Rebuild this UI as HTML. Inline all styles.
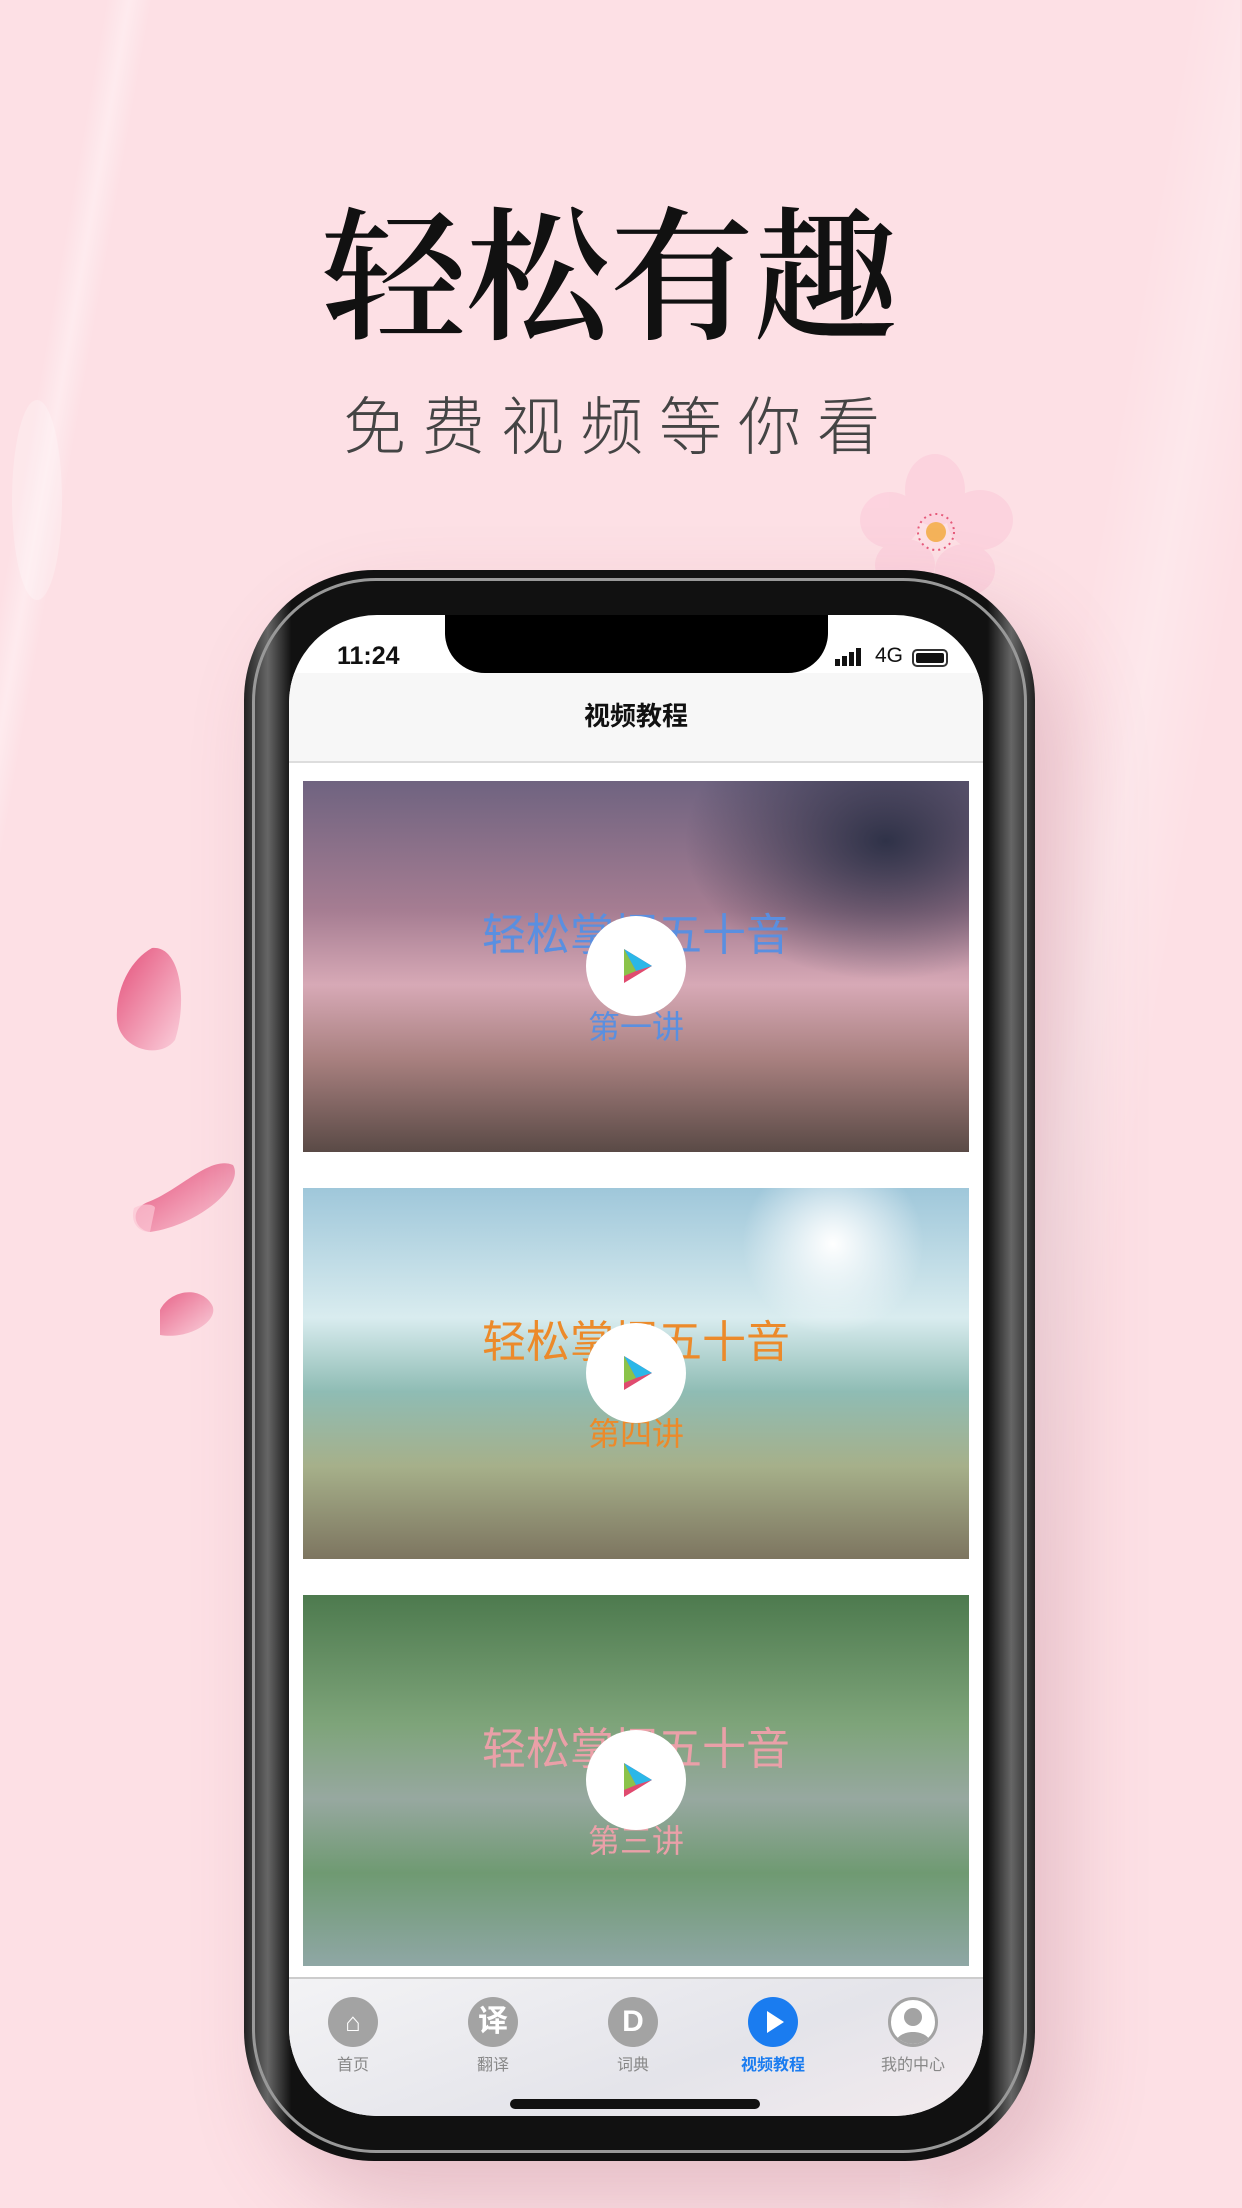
<!DOCTYPE html>
<html><head><meta charset="utf-8"><style>
*{margin:0;padding:0;box-sizing:border-box}
body{width:1242px;height:2208px;overflow:hidden;background:#fde0e5;position:relative;font-family:"Liberation Sans","Noto Sans CJK SC",sans-serif}
.abs{position:absolute}
.title{left:322px;top:196px;width:600px;font-family:"Liberation Serif","Noto Serif CJK SC",serif;font-weight:600;font-size:144px;line-height:170px;color:#111;white-space:nowrap}
.sub{left:343px;top:388px;font-family:"Liberation Sans","Noto Sans CJK SC",sans-serif;font-weight:300;font-size:63px;line-height:80px;letter-spacing:16px;color:#444;white-space:nowrap}
.phone{left:244px;top:570px;width:791px;height:1591px;border-radius:130px;background:linear-gradient(90deg,#222,#666 3%,#111 6%,#111 94%,#666 97%,#222);box-shadow:30px 40px 80px rgba(160,90,110,.25)}
.screen{left:289px;top:615px;width:694px;height:1501px;border-radius:88px;background:#fff;overflow:hidden}
.notch{left:156px;top:0;width:383px;height:58px;background:#000;border-radius:0 0 40px 40px}
.card{left:14px;width:666px;height:371px;overflow:hidden}
.ct{position:absolute;left:0;width:100%;text-align:center;font-size:44px;line-height:50px}
.cs{position:absolute;left:0;width:100%;text-align:center;font-size:32px;line-height:40px}
.play{position:absolute;left:283px;width:100px;height:100px;border-radius:50%;background:#fff}
.tab{position:absolute;top:18px;width:100px;text-align:center;font-size:16px;color:#888}
.ic{width:50px;height:50px;border-radius:50%;background:#a3a3a3;margin:0 auto 4px;color:#fff;font-weight:bold;font-size:30px;line-height:50px;text-align:center}
</style></head><body>
<div class="abs" style="left:-100px;top:0;width:300px;height:900px;background:linear-gradient(100deg,transparent 45%,rgba(255,255,255,.35) 50%,transparent 55%)"></div>
<div class="abs" style="left:900px;top:0;width:340px;height:2208px;background:linear-gradient(100deg,transparent 40%,rgba(255,255,255,.25) 50%,transparent 60%)"></div>
<div class="abs" style="left:12px;top:400px;width:50px;height:200px;border-radius:50%;background:rgba(255,255,255,.25)"></div>
<div class="abs title">轻松有趣</div>
<div class="abs sub">免费视频等你看</div>
<svg class="abs" style="left:850px;top:450px" width="170" height="150" viewBox="0 0 170 150">
<g fill="#fccfdc" opacity=".75">
<ellipse cx="85" cy="40" rx="30" ry="36"/><ellipse cx="130" cy="70" rx="33" ry="30"/><ellipse cx="115" cy="120" rx="30" ry="26"/><ellipse cx="55" cy="115" rx="30" ry="26"/><ellipse cx="40" cy="70" rx="30" ry="28"/></g>
<circle cx="86" cy="82" r="10" fill="#f5b35a"/><circle cx="86" cy="82" r="18" fill="none" stroke="#e65a7a" stroke-width="2" stroke-dasharray="2 4"/>
</svg>
<svg class="abs" style="left:100px;top:940px" width="150" height="440" viewBox="0 0 150 440">
<defs><linearGradient id="pg" x1="0" y1="0" x2="1" y2="1"><stop offset="0" stop-color="#e4507a"/><stop offset="1" stop-color="#fbd0dc"/></linearGradient></defs>
<path d="M52 8 C80 5 88 60 75 100 C60 120 20 110 17 80 C15 50 30 20 52 8Z" fill="url(#pg)"/>
<path d="M48 262 C80 250 110 215 133 225 C145 245 100 285 50 292 C35 290 28 270 48 262Z" fill="url(#pg)"/>
<path d="M34 268 C45 262 55 265 55 268 L50 292 C38 292 30 282 34 268Z" fill="#fbc6d4" opacity=".7"/>
<path d="M60 395 C90 400 120 380 112 365 C100 345 70 350 60 370Z" fill="url(#pg)" opacity=".85"/>
</svg>
<div class="abs phone"></div>
<div class="abs" style="left:252px;top:578px;width:775px;height:1575px;border-radius:124px;border:3px solid #999"></div>
<div class="abs screen">
 <div class="abs notch"></div>
 <div class="abs" style="left:48px;top:27px;font-size:25px;font-weight:bold;color:#111">11:24</div>
 <div class="abs" style="left:546px;top:33px;width:32px;height:18px">
  <div class="abs" style="left:0;top:11px;width:5px;height:7px;background:#111"></div><div class="abs" style="left:7px;top:8px;width:5px;height:10px;background:#111"></div><div class="abs" style="left:14px;top:4px;width:5px;height:14px;background:#111"></div><div class="abs" style="left:21px;top:0;width:5px;height:18px;background:#111"></div></div>
 <div class="abs" style="left:586px;top:29px;font-size:21px;color:#111">4G</div>
 <div class="abs" style="left:623px;top:34px;width:36px;height:18px;border:2px solid #333;border-radius:5px;padding:2px"><div style="width:100%;height:100%;background:#111;border-radius:2px"></div></div>
 <div class="abs" style="left:0;top:58px;width:694px;height:90px;background:#f7f7f7;border-bottom:2px solid #ddd;text-align:center;font-size:26px;font-weight:bold;line-height:86px;color:#111">视频教程</div>
 <div class="abs card" style="top:166px;background:linear-gradient(180deg,#6f6380 0%,#a67d92 35%,#d7a9b6 55%,#a8807f 75%,#5a4a46 100%)">
  <div class="abs" style="left:380px;top:0;width:290px;height:200px;background:radial-gradient(ellipse at 70% 30%,#2f3248,transparent 70%)"></div>
  <div class="ct" style="top:130px;color:#5a8fe0">轻松掌握五十音</div><div class="cs" style="top:226px;color:#5a8fe0">第一讲</div>
  <div class="play" style="top:135px"><svg width="100" height="100" viewBox="0 0 100 100"><path d="M38 33 L66 50 L38 67Z" fill="#e04b6f"/><path d="M38 33 L66 50 L50 55Z" fill="#2bb7e8"/><path d="M38 33 L50 55 L38 60Z" fill="#8bc34a"/></svg></div>
 </div>
 <div class="abs card" style="top:573px;background:linear-gradient(180deg,#9fc7da 0%,#d9ecef 35%,#8fbcb4 55%,#a6b08a 75%,#7d7560 100%)">
  <div class="abs" style="left:420px;top:0;width:220px;height:160px;background:radial-gradient(circle at 50% 35%,#fff,transparent 60%)"></div>
  <div class="ct" style="top:130px;color:#ec8a2a">轻松掌握五十音</div><div class="cs" style="top:226px;color:#ec8a2a">第四讲</div>
  <div class="play" style="top:135px"><svg width="100" height="100" viewBox="0 0 100 100"><path d="M38 33 L66 50 L38 67Z" fill="#e04b6f"/><path d="M38 33 L66 50 L50 55Z" fill="#2bb7e8"/><path d="M38 33 L50 55 L38 60Z" fill="#8bc34a"/></svg></div>
 </div>
 <div class="abs card" style="top:980px;background:linear-gradient(180deg,#4d7a4e 0%,#7ea47a 35%,#97a8a0 55%,#6f9a72 75%,#8fa7a5 100%)">
  <div class="ct" style="top:130px;color:#eaa0a8">轻松掌握五十音</div><div class="cs" style="top:226px;color:#eaa0a8">第三讲</div>
  <div class="play" style="top:135px"><svg width="100" height="100" viewBox="0 0 100 100"><path d="M38 33 L66 50 L38 67Z" fill="#e04b6f"/><path d="M38 33 L66 50 L50 55Z" fill="#2bb7e8"/><path d="M38 33 L50 55 L38 60Z" fill="#8bc34a"/></svg></div>
 </div>
 <div class="abs" style="left:0;top:1362px;width:694px;height:139px;background:linear-gradient(160deg,#f3f3f5,#e4e4ea 60%,#f3ebee);border-top:2px solid #ccc">
  <div class="tab" style="left:14px"><div class="ic" style="font-size:26px">⌂</div>首页</div>
  <div class="tab" style="left:154px"><div class="ic">译</div>翻译</div>
  <div class="tab" style="left:294px"><div class="ic">D</div>词典</div>
  <div class="tab" style="left:434px;color:#1a7cf0;font-weight:bold"><div class="ic" style="background:#1a7cf0"><svg width="50" height="50"><path d="M19 14 L36 25 L19 36Z" fill="#fff"/></svg></div>视频教程</div>
  <div class="tab" style="left:574px"><div class="ic" style="background:#fff;border:3px solid #a3a3a3;overflow:hidden"><svg width="44" height="44"><circle cx="22" cy="17" r="9" fill="#a3a3a3"/><path d="M4 44 C6 28 38 28 40 44Z" fill="#a3a3a3"/></svg></div>我的中心</div>
  <div class="abs" style="left:221px;top:120px;width:250px;height:10px;border-radius:5px;background:#111"></div>
 </div>
</div>
</body></html>
